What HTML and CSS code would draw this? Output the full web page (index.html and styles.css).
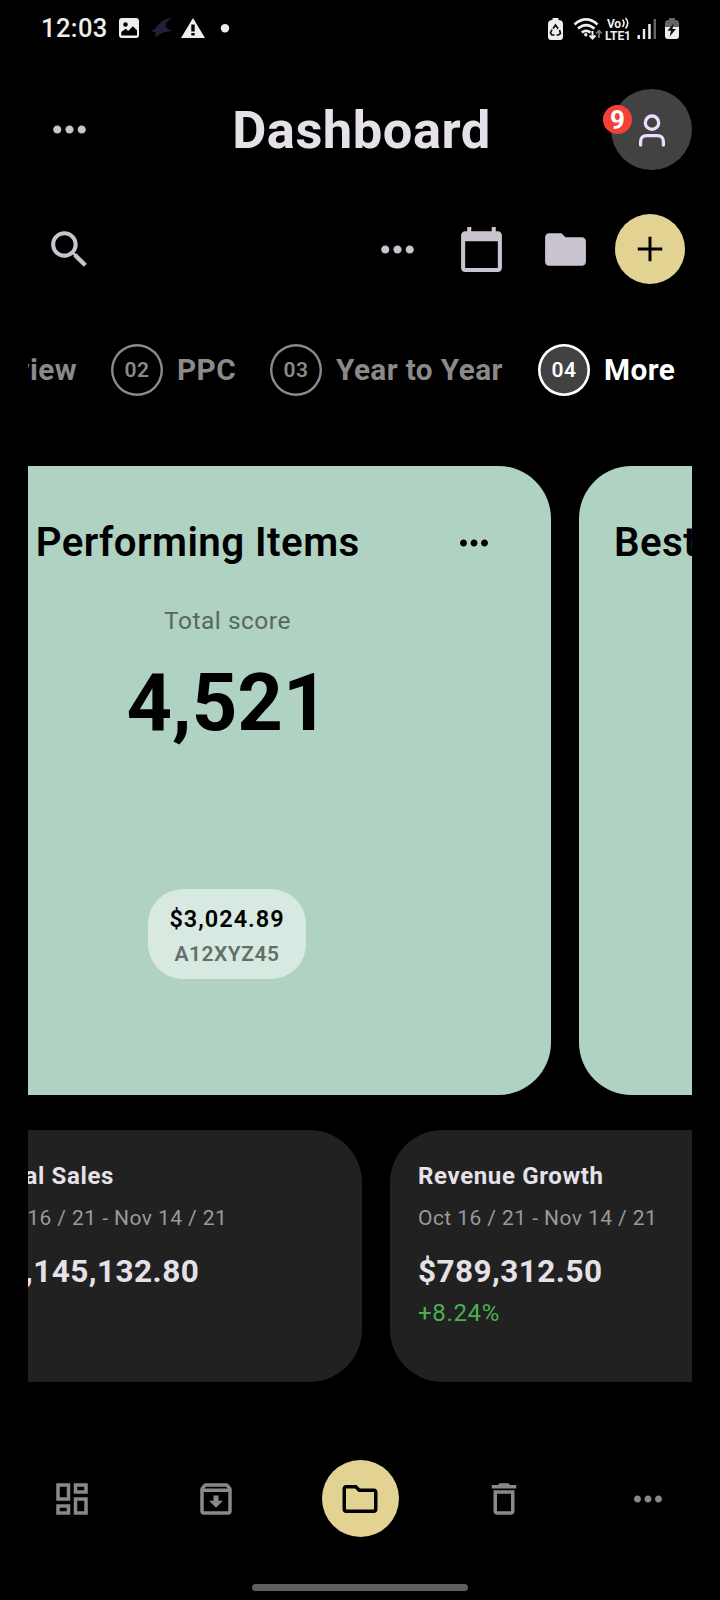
FILE: index.html
```html
<!DOCTYPE html>
<html lang="en">
<head>
<meta charset="utf-8">
<title>Dashboard</title>
<link rel="stylesheet" href="styles.css">
</head>
<body>
<svg class="defs" aria-hidden="true">
  <symbol id="more" viewBox="0 0 24 24"><path d="M6 10c-1.100 0-2 .9-2 2s.9 2 2 2 2-.9 2-2-.9-2-2-2zm12 0c-1.100 0-2 .9-2 2s.9 2 2 2 2-.9 2-2-.9-2-2-2zm-6 0c-1.100 0-2 .9-2 2s.9 2 2 2 2-.9 2-2-.9-2-2-2z"/></symbol>
</svg>
<div class="screen">
  <header class="status">
    <span class="clock">12:03</span>
    <svg class="st-left" viewBox="0 0 112 24">
      <path fill="#eee" fill-rule="evenodd" d="M3 0h14a3 3 0 0 1 3 3v14a3 3 0 0 1-3 3H3a3 3 0 0 1-3-3V3a3 3 0 0 1 3-3zM6.500 4.200a2.300 2.300 0 1 0 0 4.600a2.300 2.300 0 0 0 0-4.600zM2.300 14v3.500h15.700v-5.200l-4.200-4-4.600 4.800-2.500-2.300z"/>
      <path fill="#241f38" d="M29.500 12.300c4 .6 6-.4 8-3.200 2-3.100 5-6.200 9-7.900 3-.8 6-1 8-1.200-4 1.100-7.500 3.800-7.800 7 0 3.200 3.300 5.900 7.800 5.200-3.500 1.500-6.800.9-9.200 2-3.200 1.300-6.300 3-10 5.300 1.200-2.300 2-3.700 1-5-1.300-1.300-4-1.200-6.800-2.200z"/>
      <path fill="#eee" fill-rule="evenodd" d="M74 0L86 20H62zM72.300 6.500v7h3.400v-7zM72.300 15v2.500h3.400V15z"/>
      <circle fill="#eee" cx="106" cy="10.300" r="4.200"/>
    </svg>
    <svg class="st-right" viewBox="0 0 132 26">
      <path fill="#eee" d="M4.500 2V0h6v2q4.500 0 4.500 4v13q0 3-3 3H3q-3 0-3-3V6q0-4 4.500-4z"/>
      <path fill="none" stroke="#111" stroke-width="1.700" d="M5.100 10.500L7.500 7l2.600 3.700M11.500 12l1 3.500-2 1.500h-2M6.500 17H3.800L2.500 15l1.500-3.500"/>
      <g fill="none" stroke="#eee" stroke-width="2.700">
        <path d="M26.500 6.400Q38-3.600 49.500 6.400M30 10.600Q38 3.600 46.500 10.600M33.800 14.600Q38 11 42.500 14.600"/>
      </g>
      <circle fill="#eee" cx="37.800" cy="16.800" r="1.700"/>
      <path fill="none" stroke="#eee" stroke-width="2" d="M44.500 13v7M41.500 17.500l3 3 3-3"/>
      <path fill="none" stroke="#777" stroke-width="1.800" d="M51 20v-7M48.200 15.500l2.800-3 2.800 3"/>
      <text class="net" x="59" y="9.500" textLength="14">Vo</text>
      <path fill="none" stroke="#eee" stroke-width="1.600" d="M74.500 1.500q3 3.300 0 7.500M77.500 0q4.500 4.800 0 10.400"/>
      <text class="net" x="57" y="21.500" textLength="26">LTE1</text>
      <path fill="#eee" d="M89.500 17h2.400v4h-2.400zM94.800 11h2.400v10h-2.400zM100.200 6h2.500v15h-2.500z"/>
      <path fill="#666" d="M105.600 1h2.400v20h-2.400z"/>
      <path fill="#666" d="M121 2V0h6v2q4 0 4 3v4h-14V5q0-3 4-3z"/>
      <path fill="#eee" d="M117 9h14v9q0 3-3 3h-8q-3 0-3-3z"/>
      <path fill="#111" d="M125.500 5.500l-6 7.200h3.500l-1.500 6 6.500-7.700h-3.500z"/>
    </svg>
  </header>

  <div class="bar title-bar">
    <div class="cell"><svg class="i49"><use href="#more"/></svg></div>
    <h1>Dashboard</h1>
    <div class="avatar">
      <svg viewBox="0 0 30 36" fill="none" stroke="#eaddff" stroke-width="3.300"><circle cx="15" cy="10.700" r="6.700"/><path stroke-linecap="round" d="M3.600 33v-3.400c0-3.600 2.500-6 6-6h10.800c3.500 0 6 2.400 6 6V33"/></svg>
      <span class="badge">9</span>
    </div>
  </div>

  <div class="bar tools">
    <div class="cell"><svg class="i49" viewBox="0 0 24 24"><path d="M15.500 14h-.79l-.28-.27C15.410 12.590 16 11.110 16 9.500 16 5.910 13.090 3 9.500 3S3 5.910 3 9.500 5.910 16 9.500 16c1.610 0 3.090-.59 4.230-1.570l.27.28v.79l5 4.990L20.490 19l-4.990-5zm-6 0C7.010 14 5 11.990 5 9.500S7.010 5 9.500 5 14 7.010 14 9.500 11.990 14 9.500 14z"/></svg></div>
    <div class="spacer"></div>
    <div class="cell"><svg class="i49"><use href="#more"/></svg></div>
    <div class="cell"><svg class="i49" viewBox="0 0 24 24"><path d="M20 3h-1V1h-2v2H7V1H5v2H4c-1.100 0-2 .9-2 2v16c0 1.100.9 2 2 2h16c1.100 0 2-.9 2-2V5c0-1.100-.9-2-2-2zm0 18H4V8h16v13z"/></svg></div>
    <div class="cell"><svg class="i49" viewBox="0 0 24 24"><path d="M10 4H4c-1.100 0-1.990.9-1.990 2L2 18c0 1.100.9 2 2 2h16c1.100 0 2-.9 2-2V8c0-1.100-.9-2-2-2h-8l-2-2z"/></svg></div>
    <div class="cell"><div class="fab"><svg class="i42" viewBox="0 0 24 24"><path d="M19 12.850h-6.150V19h-1.700v-6.150H5v-1.700h6.150V5h1.700v6.150H19z"/></svg></div></div>
  </div>

  <nav class="tabs">
    <div class="tab t1"><b>01</b><span>Overview</span></div>
    <div class="tab t2"><b>02</b><span>PPC</span></div>
    <div class="tab t3"><b>03</b><span>Year to Year</span></div>
    <div class="tab t4 on"><b>04</b><span>More</span></div>
  </nav>

  <section class="clip scores">
    <div class="track big">
      <article class="score">
        <div class="head"><h2 class="first">Best Performing Items</h2><div class="cell"><svg class="i42"><use href="#more"/></svg></div></div>
        <p class="label">Total score</p>
        <p class="num">4,521</p>
        <div class="chip"><strong>$3,024.89</strong><span>A12XYZ45</span></div>
      </article>
      <article class="score"><div class="head"><h2>Best Selling Items</h2></div></article>
    </div>
  </section>

  <section class="clip stats">
    <div class="track small">
      <article class="stat"><h3>Total Sales</h3><p class="date">Oct 16 / 21 - Nov 14 / 21</p><p class="amt">$2,145,132.80</p></article>
      <article class="stat"><h3>Revenue Growth</h3><p class="date">Oct 16 / 21 - Nov 14 / 21</p><p class="amt">$789,312.50</p><p class="pct">+8.24%</p></article>
    </div>
  </section>

  <nav class="bottom">
    <div><svg class="i42" viewBox="0 0 24 24"><path d="M19 5v2h-4V5h4M9 5v6H5V5h4m10 8v6h-4v-6h4M9 17v2H5v-2h4M21 3h-8v6h8V3zM11 3H3v10h8V3zm10 8h-8v10h8V11zm-10 4H3v6h8v-6z"/></svg></div>
    <div><svg class="i42" viewBox="0 0 24 24"><path d="M20.540 5.230l-1.390-1.680C18.880 3.210 18.470 3 18 3H6c-.47 0-.88.21-1.160.55L3.460 5.230C3.170 5.570 3 6.020 3 6.500V19c0 1.100.9 2 2 2h14c1.100 0 2-.9 2-2V6.500c0-.48-.17-.93-.46-1.270zM6.240 5h11.520l.83 1H5.420l.82-1zM5 19V8h14v11H5zm8.450-9h-2.900v3H8l4 4 4-4h-2.550z"/></svg></div>
    <div><span class="home"><svg class="i42" viewBox="0 0 24 24"><path d="M9.170 6l2 2H20v10H4V6h5.170M10 4H4c-1.100 0-1.990.9-1.990 2L2 18c0 1.100.9 2 2 2h16c1.100 0 2-.9 2-2V8c0-1.100-.9-2-2-2h-8l-2-2z"/></svg></span></div>
    <div><svg class="i42" viewBox="0 0 24 24"><path d="M16 9v10H8V9h8m-1.500-6h-5l-1 1H5v2h14V4h-3.500l-1-1zM18 7H6v12c0 1.100.9 2 2 2h8c1.100 0 2-.9 2-2V7z"/></svg></div>
    <div><svg class="i42"><use href="#more"/></svg></div>
  </nav>
  <div class="gesture"></div>
</div>
</body>
</html>
```
FILE: styles.css
```css
* { box-sizing: border-box; }
body, h1, h2, h3, p { margin: 0; }
body { background: #000; font-family: Roboto, "Liberation Sans", sans-serif; }
svg { display: block; flex: none; }
.defs { position: absolute; width: 0; height: 0; }
.screen { width: 720px; height: 1600px; overflow: hidden; background: #000; color: #e6e1e9; display: flex; flex-direction: column; }
.i49 { width: 49px; height: 49px; fill: #cac4d0; margin-right: 1px; }
.i42 { width: 42px; height: 42px; fill: #000; }
.cell { width: 84px; height: 84px; flex: none; display: flex; align-items: center; justify-content: center; }

.status { height: 56px; flex: none; padding: 0 40px 0 41px; display: flex; align-items: center; }
.clock { width: 78px; font-size: 25.500px; font-weight: 500; line-height: 56px; letter-spacing: .4px; color: #eee; }
.st-left { width: 112px; height: 24px; margin-top: 4px; }
.st-right { width: 132px; height: 26px; margin: 5px 0 0 auto; overflow: visible; }
.net { font-size: 12px; font-weight: 700; fill: #eee; }

.bar { display: flex; align-items: center; flex: none; padding: 0 28px; }
.title-bar { height: 81px; margin-top: 33px; justify-content: space-between; }
h1 { font-size: 52.500px; line-height: 62px; font-weight: 700; letter-spacing: .5px; margin-left: 0; }
.avatar { position: relative; width: 81px; height: 81px; border-radius: 50%; background: #424242; display: flex; align-items: center; justify-content: center; }
.avatar svg { width: 30px; height: 36px; }
.badge { position: absolute; left: -8px; top: 16px; width: 29px; height: 29px; border-radius: 50%; background: #f44336; color: #fff; font-size: 26px; line-height: 30px; font-weight: 700; text-align: center; }
.tools { height: 84px; margin-top: 37px; }
.spacer { flex: 1; }
.fab { width: 70px; height: 70px; border-radius: 50%; background: #e2d393; display: flex; align-items: center; justify-content: center; }

.tabs { height: 52px; flex: none; margin: 53px 28px 0; overflow: hidden; display: flex; color: #8a8a8a; }
.tab { flex: none; display: flex; align-items: center; gap: 14px; font-size: 29.750px; font-weight: 700; letter-spacing: .4px; white-space: nowrap; }
.tab span { margin-top: -2px; }
.tab b { width: 52px; height: 52px; box-shadow: inset 0 0 0 2.400px #8a8a8a; border-radius: 50%; font-size: 21px; font-weight: 600; letter-spacing: .5px; display: flex; align-items: center; justify-content: center; }
.t1 { width: 234px; margin-left: -151px; justify-content: flex-end; padding-right: 34px; }
.t2 { width: 159px; }
.t3 { width: 268px; }
.on { color: #fff; }
.tab.on b { box-shadow: inset 0 0 0 2.600px #fff; background: #424242; }

.clip { margin: 0 28px; overflow: hidden; flex: none; }
.track { display: flex; gap: 28px; }
.big { margin-left: -124px; }
.scores { margin-top: 70px; }
.stats { margin-top: 35px; }
.score { width: 647px; height: 629px; flex: none; background: #b0d2c3; border-radius: 52.500px; padding: 35px; color: #000; display: flex; flex-direction: column; align-items: center; }
.head { width: 100%; height: 84px; display: flex; align-items: center; justify-content: space-between; }
h2 { font-size: 40.250px; line-height: 48px; font-weight: 600; letter-spacing: .45px; white-space: nowrap; }
.first { margin-left: 3px; }
.label { margin-top: 22px; font-size: 24.500px; line-height: 28px; letter-spacing: .5px; color: #576860; }
.num { margin-top: 21px; font-size: 79.500px; line-height: 94px; font-weight: 700; }
.chip { margin-top: 139px; margin-right: 1px; width: 158px; height: 90px; border-radius: 35px; background: #d8e9e1; display: flex; flex-direction: column; align-items: center; padding-top: 14px; }
.chip strong { font-size: 23.500px; line-height: 32px; font-weight: 600; letter-spacing: 1px; }
.chip span { margin-top: 6px; font-size: 21px; line-height: 26px; font-weight: 600; letter-spacing: .5px; color: #63706a; }

.small { margin-left: -68px; }
.stat { width: 402px; height: 252px; flex: none; background: #212121; border-radius: 52.500px; padding: 28px; white-space: nowrap; }
h3 { margin-top: 3px; font-size: 24px; line-height: 30px; font-weight: 700; letter-spacing: .65px; }
.date { margin-top: 14px; font-size: 21px; line-height: 26px; letter-spacing: .43px; color: #9a9a9a; }
.amt { margin-top: 22px; font-size: 31.500px; line-height: 38px; font-weight: 700; letter-spacing: .45px; }
.pct { margin-top: 8px; font-size: 24px; line-height: 28px; letter-spacing: .65px; color: #4caf50; }

.bottom { height: 77px; flex: none; margin-top: 78px; display: grid; grid-template-columns: repeat(5, 1fr); }
.bottom > div { display: flex; align-items: center; justify-content: center; }
.bottom .i42 { fill: #8a888c; }
.home { width: 77px; height: 77px; border-radius: 50%; background: #e2d393; display: flex; align-items: center; justify-content: center; }
.bottom .home .i42 { fill: #000; }
.gesture { width: 216px; height: 7px; border-radius: 4px; background: #5f5f5f; margin: 47px auto 0; flex: none; }
```
